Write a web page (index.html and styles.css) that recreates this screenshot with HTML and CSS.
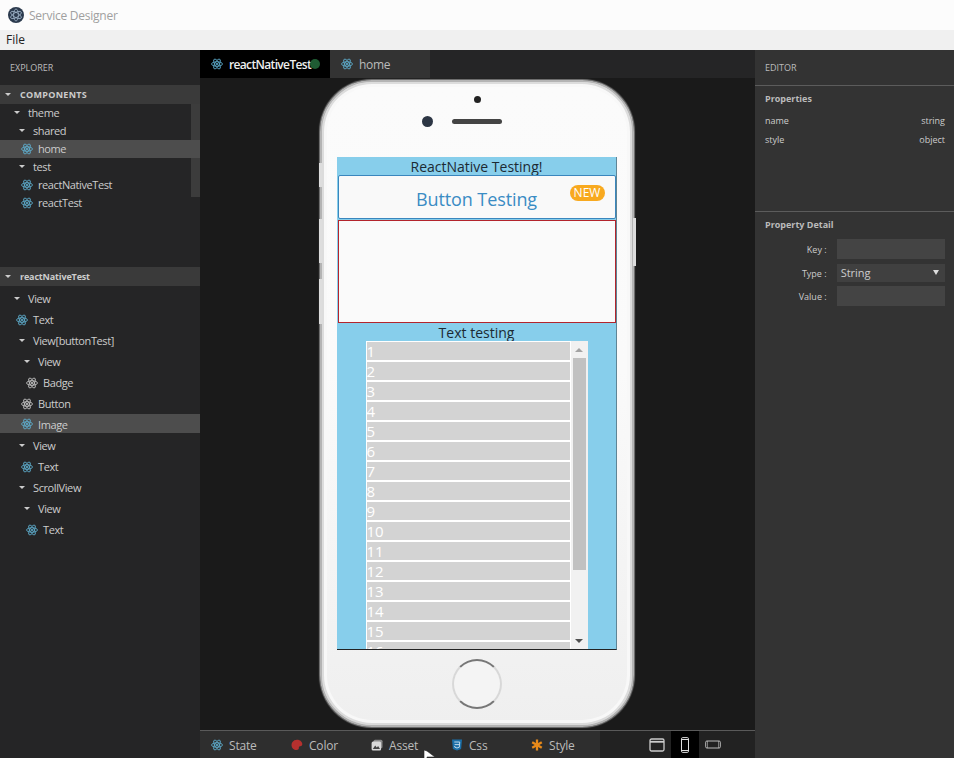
FILE: index.html
```html
<!DOCTYPE html>
<html lang="en">
<head>
    <meta charset="UTF-8">
    <title>Service Designer</title>
    <link rel="stylesheet" href="styles.css">
</head>
<body>
    <svg class="defs" width="0" height="0">
        <symbol id="react" viewBox="0 0 24 24">
            <g fill="none" stroke="currentColor" stroke-width="1.7">
                <ellipse cx="12" cy="12" rx="11" ry="4.4"/>
                <ellipse cx="12" cy="12" rx="11" ry="4.4" transform="rotate(60 12 12)"/>
                <ellipse cx="12" cy="12" rx="11" ry="4.4" transform="rotate(120 12 12)"/>
            </g>
            <circle cx="12" cy="12" r="2.2" fill="currentColor"/>
        </symbol>
    </svg>

    <div class="titlebar">
        <svg class="app-logo" viewBox="0 0 16 16">
            <circle cx="8" cy="8" r="8" fill="#2b3a4d"/>
            <g fill="none" stroke="#9fb4c9" stroke-width="0.8">
                <ellipse cx="8" cy="8" rx="6" ry="2.4" transform="rotate(30 8 8)"/>
                <ellipse cx="8" cy="8" rx="6" ry="2.4" transform="rotate(90 8 8)"/>
                <ellipse cx="8" cy="8" rx="6" ry="2.4" transform="rotate(150 8 8)"/>
            </g>
        </svg>
        <span>Service Designer</span>
    </div>
    <div class="menubar"><span>File</span></div>

    <div class="main">
        <aside class="explorer">
            <div class="pane-title">EXPLORER</div>
            <div class="section-head caps"><i class="caret"></i>COMPONENTS</div>
            <div class="tree tree-top">
                <div class="tree-scroll"></div>
                <div class="row lv1"><i class="caret"></i>theme</div>
                <div class="row lv2"><i class="caret"></i>shared</div>
                <div class="row lv3 selected"><svg class="ico"><use href="#react"/></svg>home</div>
                <div class="row lv2"><i class="caret"></i>test</div>
                <div class="row lv3"><svg class="ico"><use href="#react"/></svg>reactNativeTest</div>
                <div class="row lv3"><svg class="ico"><use href="#react"/></svg>reactTest</div>
            </div>
            <div class="section-head"><i class="caret"></i>reactNativeTest</div>
            <div class="tree tree-bottom">
                <div class="row lv1"><i class="caret"></i>View</div>
                <div class="row lv2b"><svg class="ico"><use href="#react"/></svg>Text</div>
                <div class="row lv2"><i class="caret"></i>View[buttonTest]</div>
                <div class="row lv3a"><i class="caret"></i>View</div>
                <div class="row lv4"><svg class="ico pale"><use href="#react"/></svg>Badge</div>
                <div class="row lv3"><svg class="ico pale"><use href="#react"/></svg>Button</div>
                <div class="row lv3 selected"><svg class="ico"><use href="#react"/></svg>Image</div>
                <div class="row lv2"><i class="caret"></i>View</div>
                <div class="row lv3"><svg class="ico"><use href="#react"/></svg>Text</div>
                <div class="row lv2"><i class="caret"></i>ScrollView</div>
                <div class="row lv3a"><i class="caret"></i>View</div>
                <div class="row lv4"><svg class="ico"><use href="#react"/></svg>Text</div>
            </div>
        </aside>

        <section class="center">
            <div class="tabs">
                <div class="tab active"><svg class="ico"><use href="#react"/></svg>reactNativeTest<b class="dot"></b></div>
                <div class="tab"><svg class="ico"><use href="#react"/></svg>home</div>
            </div>

            <div class="canvas">
                <div class="phone">
                    <i class="side-btn left b1"></i>
                    <i class="side-btn left b2"></i>
                    <i class="side-btn left b3"></i>
                    <i class="side-btn right b4"></i>
                    <div class="phone-top">
                        <i class="sensor"></i>
                        <div class="earpiece-row">
                            <i class="camera"></i>
                            <i class="speaker"></i>
                        </div>
                    </div>
                    <div class="screen">
                        <div class="screen-title">ReactNative Testing!</div>
                        <div class="button-test">
                            Button Testing
                            <span class="badge">NEW</span>
                        </div>
                        <div class="image-box"></div>
                        <div class="screen-title second">Text testing</div>
                        <div class="scrollview">
                            <div class="items">
                                <div class="item">1</div>
                                <div class="item">2</div>
                                <div class="item">3</div>
                                <div class="item">4</div>
                                <div class="item">5</div>
                                <div class="item">6</div>
                                <div class="item">7</div>
                                <div class="item">8</div>
                                <div class="item">9</div>
                                <div class="item">10</div>
                                <div class="item">11</div>
                                <div class="item">12</div>
                                <div class="item">13</div>
                                <div class="item">14</div>
                                <div class="item">15</div>
                                <div class="item">16</div>
                            </div>
                            <div class="scrollbar">
                                <i class="arrow up"></i>
                                <div class="thumb"></div>
                                <i class="arrow down"></i>
                            </div>
                        </div>
                    </div>
                    <div class="home-btn"></div>
                </div>
            </div>

            <div class="bottombar">
                <div class="bottom-tabs">
                    <div class="btab"><svg class="ico"><use href="#react"/></svg>State</div>
                    <div class="btab">
                        <svg class="ico" viewBox="0 0 12 12"><path d="M6 .8C9.2.8 11.5 3 11.3 5.6 11.1 7.6 9.2 7.2 8.3 7.6 7.4 8 8.3 9.400 7.500 10.300 6.400 11.500 3.600 11.200 2 9.700.2 8 .1 5.200 1.300 3.300 2.400 1.600 4.200.8 6 .8Z" fill="#b5302e"/></svg>
                        Color
                    </div>
                    <div class="btab">
                        <svg class="ico" viewBox="0 0 12 12"><rect x="2.500" y=".8" width="9" height="8.500" rx="1.500" fill="#8a8a8a"/><rect x=".6" y="2.600" width="9.500" height="8.800" rx="1.500" fill="#d8d8d8"/><path d="M1.800 10l2.400-3.400 1.600 1.800 1.300-1.300L9 10Z" fill="#444"/></svg>
                        Asset
                    </div>
                    <div class="btab">
                        <svg class="ico" viewBox="0 0 12 12"><path d="M1 .5h10l-.9 9.500L6 11.500 1.900 10Z" fill="#1b6fa8"/><path d="M3.300 3h5.400l-.4 5.200L6 9 3.800 8.200 3.700 7" fill="none" stroke="#cfe3f0" stroke-width=".9"/><path d="M3.600 5.600h4.600" stroke="#cfe3f0" stroke-width=".9"/></svg>
                        Css
                    </div>
                    <div class="btab">
                        <svg class="ico" viewBox="0 0 12 12"><g stroke="#e88a1a" stroke-width="2.300"><path d="M6 .5v11"/><path d="M1.200 3.200l9.600 5.600"/><path d="M1.200 8.800l9.600-5.600"/></g></svg>
                        Style
                    </div>
                </div>
                <div class="devices">
                    <div class="device">
                        <svg width="16" height="14" viewBox="0 0 16 14"><rect x="1" y="1" width="14" height="12" rx="1.500" fill="none" stroke="#ccc" stroke-width="1.300"/><path d="M1 3.800h14" stroke="#ccc" stroke-width="1.800"/></svg>
                    </div>
                    <div class="device current">
                        <svg width="10" height="16" viewBox="0 0 10 16"><rect x="1.500" y=".6" width="7" height="14.800" rx="1.200" fill="none" stroke="#ddd"/><path d="M1.500 2.500h7M1.500 13.500h7" stroke="#ddd"/></svg>
                    </div>
                    <div class="device">
                        <svg width="16" height="10" viewBox="0 0 16 10"><rect x=".7" y="1" width="14.600" height="7" rx="1.200" fill="none" stroke="#bbb"/><path d="M2.500 1v7M13.500 1v7" stroke="#bbb" stroke-width=".6"/></svg>
                    </div>
                </div>
            </div>
        </section>

        <aside class="editor">
            <div class="pane-title">EDITOR</div>
            <div class="props">
                <h3>Properties</h3>
                <div class="prop"><span>name</span><span>string</span></div>
                <div class="prop"><span>style</span><span>object</span></div>
            </div>
            <div class="detail">
                <h3>Property Detail</h3>
                <div class="field"><label>Key :</label><div class="input"></div></div>
                <div class="field"><label>Type :</label><div class="input select">String<i class="select-arrow"></i></div></div>
                <div class="field"><label>Value :</label><div class="input"></div></div>
            </div>
        </aside>
    </div>

    <svg class="cursor" width="14" height="14" viewBox="0 0 14 14"><path d="M1 0v12h3V7h8L4 1Z" fill="#fff" stroke="#222" stroke-width=".6"/></svg>
</body>
</html>
```

FILE: styles.css
```css
* {
    box-sizing: border-box;
}
html, body {
    height: 100%;
}
body {
    margin: 0;
    height: 758px;
    overflow: hidden;
    display: flex;
    flex-direction: column;
    position: relative;
    font-family: "Open Sans", "Noto Sans", sans-serif;
    font-size: 11px;
    color: #ccc;
    background-color: #1a1a1a;
}
.defs {
    position: absolute;
}

/* window chrome */
.titlebar {
    height: 30px;
    background-color: #fcfcfc;
    display: flex;
    align-items: center;
    padding-left: 8px;
    font-size: 12px;
    color: #a0a0a0;
    letter-spacing: -0.25px;
}
.app-logo {
    width: 16px;
    height: 16px;
    margin-right: 5px;
}
.menubar {
    height: 20px;
    background-color: #f0f0f0;
    color: #222;
    font-size: 12px;
    line-height: 19px;
    padding-left: 6px;
}
.main {
    flex: 1;
    display: flex;
    min-height: 0;
}

/* explorer */
.explorer {
    width: 200px;
    background-color: #252526;
}
.pane-title {
    height: 35px;
    padding: 11px 0 0 10px;
    font-size: 9px;
    color: #bbb;
}
.section-head {
    height: 19px;
    background-color: #3a3a3a;
    padding-left: 5px;
    font-size: 9px;
    font-weight: 700;
    line-height: 19px;
    color: #ccc;
    display: flex;
    align-items: center;
    letter-spacing: -0.15px;
}
.section-head.caps {
    letter-spacing: 0.3px;
}
.section-head .caret {
    margin-right: 9px;
}
.caret {
    width: 0;
    height: 0;
    border-left: 3px solid transparent;
    border-right: 3px solid transparent;
    border-top: 3px solid #ccc;
    margin-right: 8px;
}
.tree {
    position: relative;
    letter-spacing: -0.4px;
}
.tree-top {
    height: 163px;
}
.tree-top .row {
    padding-bottom: 1px;
}
.tree-scroll {
    position: absolute;
    top: 0;
    right: 0;
    width: 9px;
    height: 93px;
    background-color: #3c3c3c;
}
.row {
    height: 18px;
    display: flex;
    align-items: center;
    white-space: nowrap;
    position: relative;
}
.tree-bottom .row {
    height: 21px;
}
.tree-bottom .row.selected {
    height: 19px;
    margin-bottom: 2px;
    padding-top: 1px;
}
.tree-bottom {
    padding-top: 2px;
}
.lv1 { padding-left: 14px; }
.lv2 { padding-left: 19px; }
.lv2b { padding-left: 16px; }
.lv3 { padding-left: 21px; }
.lv3a { padding-left: 24px; }
.lv4 { padding-left: 26px; }
.row.selected {
    background-color: #4d4d4d;
}
.ico {
    width: 12px;
    height: 12px;
    margin-right: 5px;
    color: #5fb0d0;
    flex: none;
}
.ico.pale {
    color: #c8c8c8;
}

/* tabs */
.center {
    flex: 1;
    display: flex;
    flex-direction: column;
    min-width: 0;
}
.tabs {
    height: 28px;
    display: flex;
    background-color: #252526;
}
.tab {
    height: 28px;
    width: 100px;
    padding-left: 11px;
    display: flex;
    align-items: center;
    background-color: #333;
    color: #bbb;
    font-size: 12px;
    letter-spacing: -0.3px;
}
.tab .ico {
    margin-right: 6px;
}
.tab.active {
    width: 130px;
    background-color: #000;
    color: #eee;
    font-weight: 600;
    letter-spacing: -0.65px;
}
.dot {
    width: 10px;
    height: 10px;
    border-radius: 50%;
    background-color: #1f5c33;
    flex: none;
    margin-left: -1px;
}

/* phone */
.canvas {
    flex: 1;
    background-color: #1a1a1a;
    padding: 2px 0 0 120px;
    min-height: 0;
}
.phone {
    width: 314px;
    height: 647px;
    position: relative;
    border: 2px solid #b4b4b4;
    border-radius: 52px;
    background: linear-gradient(#fbfbfb, #fafafa 45%, #efefef);
    box-shadow: inset 0 0 0 2px #dcdcdc, inset 0 0 0 5px #f8f8f8, 0 0 1px 1px #777;
    padding: 0 15px;
}
.side-btn {
    position: absolute;
    width: 3px;
    background-color: #ddd;
}
.side-btn.left { left: -3px; }
.side-btn.right { right: -4px; }
.b1 { top: 81px; height: 24px; }
.b2 { top: 137px; height: 44px; }
.b3 { top: 197px; height: 45px; }
.b4 { top: 136px; height: 48px; }
.phone-top {
    height: 75px;
    position: relative;
    display: flex;
    flex-direction: column;
    align-items: center;
    padding-top: 14px;
}
.sensor {
    width: 7px;
    height: 7px;
    border-radius: 50%;
    background-color: #222;
}
.earpiece-row {
    margin-top: 13px;
    display: flex;
    align-items: center;
    margin-left: -30px;
}
.camera {
    width: 11px;
    height: 11px;
    border-radius: 50%;
    background-color: #2c3644;
    margin-right: 19px;
}
.speaker {
    width: 50px;
    height: 5px;
    border-radius: 3px;
    background-color: #444;
}
.screen {
    width: 280px;
    height: 493px;
    background-color: #87ceeb;
    overflow: hidden;
    border-bottom: 1px solid #222;
    border-right: 1px solid #5f8596;
    display: flex;
    flex-direction: column;
    align-items: center;
}
.screen-title {
    height: 18px;
    line-height: 19px;
    flex: none;
    font-size: 14px;
    color: #1c2a33;
}
.screen-title.second {
    line-height: 20px;
}
.button-test {
    width: 278px;
    height: 44px;
    flex: none;
    position: relative;
    border: 1px solid #3a86bd;
    border-radius: 2px;
    background-color: #f9f9f9;
    color: #3a8cc4;
    font-size: 18px;
    letter-spacing: -0.1px;
    line-height: 47px;
    text-align: center;
}
.badge {
    position: absolute;
    top: 9px;
    right: 10px;
    width: 35px;
    height: 16px;
    border-radius: 8px;
    background-color: #f8a91f;
    color: #fff;
    font-size: 12px;
    letter-spacing: 0;
    line-height: 16px;
}
.image-box {
    width: 278px;
    height: 103px;
    flex: none;
    margin-top: 1px;
    border: 1px solid #b3242c;
    background-color: #fafafa;
}
.scrollview {
    width: 222px;
    flex: 1;
    min-height: 0;
    display: flex;
    background-color: #fff;
    overflow: hidden;
}
.items {
    width: 205px;
    padding: 1px 1px 0;
}
.item {
    height: 18px;
    margin-bottom: 2px;
    background-color: #d3d3d3;
    color: #fff;
    font-size: 15px;
    line-height: 19px;
}
.scrollbar {
    width: 17px;
    background-color: #f1f1f1;
    display: flex;
    flex-direction: column;
    align-items: center;
    padding-top: 7px;
    position: relative;
}
.thumb {
    width: 13px;
    height: 212px;
    margin-top: 6px;
    background-color: #c1c1c1;
}
.arrow {
    width: 0;
    height: 0;
    border-left: 4px solid transparent;
    border-right: 4px solid transparent;
}
.arrow.up {
    border-bottom: 4px solid #a3a3a3;
}
.arrow.down {
    position: absolute;
    bottom: 6px;
    border-top: 4px solid #505050;
}
.home-btn {
    width: 50px;
    height: 50px;
    margin: 9px auto 0;
    border-radius: 50%;
    border: 2px solid #777;
    border-left-color: #d8d8d8;
    border-right-color: #d8d8d8;
    background-color: #f4f4f4;
}

/* bottom bar */
.bottombar {
    height: 28px;
    flex: none;
    display: flex;
    border-top: 1px solid #5a5a5a;
    background-color: #222;
}
.bottom-tabs {
    width: 400px;
    display: flex;
    background-color: #2e2e2e;
    padding: 1px 0 0 11px;
}
.btab {
    width: 80px;
    flex: none;
    display: flex;
    align-items: center;
    font-size: 12px;
    letter-spacing: -0.2px;
    color: #bbb;
}
.btab .ico {
    margin-right: 6px;
}
.devices {
    display: flex;
    margin-left: 43px;
}
.device {
    width: 28px;
    display: flex;
    align-items: center;
    justify-content: center;
}
.device.current {
    background-color: #000;
}

/* editor */
.editor {
    width: 199px;
    background-color: #333;
}
.editor .pane-title {
    padding-left: 10px;
}
.props {
    height: 126px;
    border-top: 1px solid #5c5c5c;
    padding: 7px 9px 0 10px;
}
h3 {
    margin: 0;
    font-size: 9px;
    font-weight: 700;
    color: #bbb;
    line-height: 12px;
}
.prop {
    display: flex;
    justify-content: space-between;
    font-size: 9px;
    line-height: 19px;
    color: #ccc;
}
.props h3 {
    margin-bottom: 6px;
}
.detail {
    border-top: 1px solid #5c5c5c;
    padding: 7px 9px 0 10px;
}
.detail h3 {
    margin-bottom: 8px;
}
.field {
    display: flex;
    align-items: center;
    margin-bottom: 3px;
    font-size: 9px;
}
.field label {
    width: 72px;
    padding: 1px 10px 0 0;
    text-align: right;
    color: #ccc;
    white-space: nowrap;
}
.input {
    width: 109px;
    height: 20px;
    background-color: #444;
}
.input.select {
    height: 18px;
    margin: 2px 0 1px;
    padding-left: 4px;
    font-size: 11px;
    line-height: 17px;
    position: relative;
    background-color: #404040;
}
.select-arrow {
    position: absolute;
    right: 6px;
    top: 6px;
    border-left: 3px solid transparent;
    border-right: 3px solid transparent;
    border-top: 5px solid #ddd;
}
.cursor {
    position: absolute;
    left: 423px;
    top: 750px;
}
```
